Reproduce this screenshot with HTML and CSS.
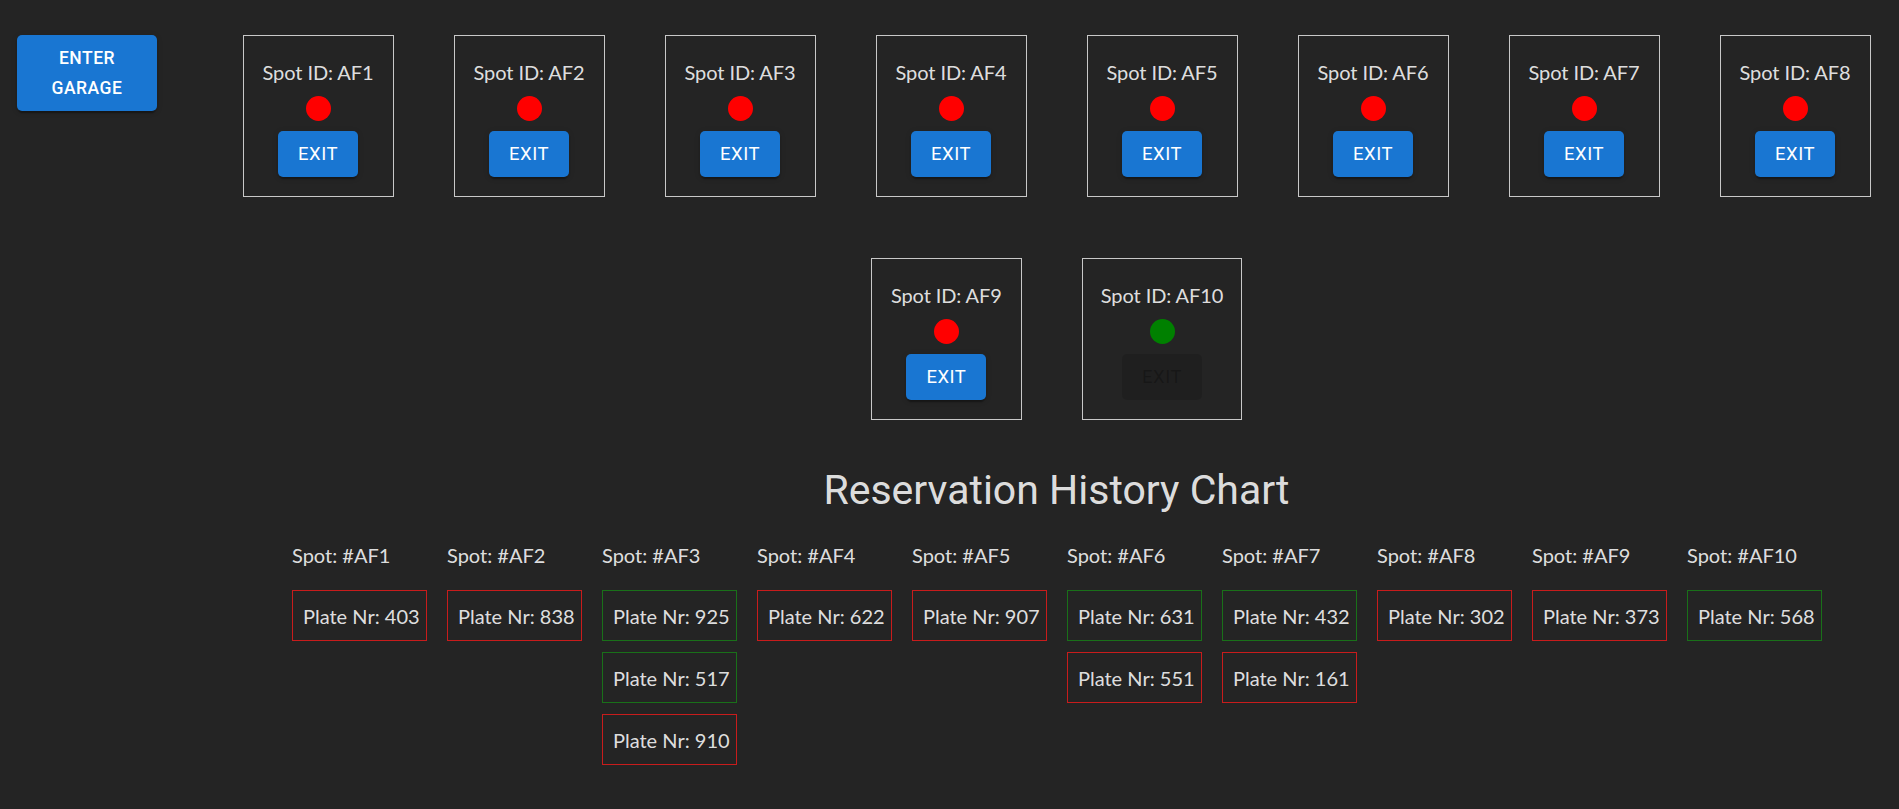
FILE: index.html
```html
<!DOCTYPE html>
<html lang="en">
<head>
<meta charset="utf-8">
<title>Garage</title>
<link rel="stylesheet" href="styles.css">
</head>
<body>
<div class="app">
  <aside class="side">
    <button class="btn btn-enter">ENTER GARAGE</button>
  </aside>
  <main class="main">
    <section class="spots">
      <div class="spot"><div class="spot-id">Spot ID: AF1</div><span class="dot dot-busy"></span><button class="btn btn-exit">EXIT</button></div>
      <div class="spot"><div class="spot-id">Spot ID: AF2</div><span class="dot dot-busy"></span><button class="btn btn-exit">EXIT</button></div>
      <div class="spot"><div class="spot-id">Spot ID: AF3</div><span class="dot dot-busy"></span><button class="btn btn-exit">EXIT</button></div>
      <div class="spot"><div class="spot-id">Spot ID: AF4</div><span class="dot dot-busy"></span><button class="btn btn-exit">EXIT</button></div>
      <div class="spot"><div class="spot-id">Spot ID: AF5</div><span class="dot dot-busy"></span><button class="btn btn-exit">EXIT</button></div>
      <div class="spot"><div class="spot-id">Spot ID: AF6</div><span class="dot dot-busy"></span><button class="btn btn-exit">EXIT</button></div>
      <div class="spot"><div class="spot-id">Spot ID: AF7</div><span class="dot dot-busy"></span><button class="btn btn-exit">EXIT</button></div>
      <div class="spot"><div class="spot-id">Spot ID: AF8</div><span class="dot dot-busy"></span><button class="btn btn-exit">EXIT</button></div>
      <div class="spot"><div class="spot-id">Spot ID: AF9</div><span class="dot dot-busy"></span><button class="btn btn-exit">EXIT</button></div>
      <div class="spot"><div class="spot-id">Spot ID: AF10</div><span class="dot dot-free"></span><button class="btn btn-exit" disabled>EXIT</button></div>
    </section>

    <h1 class="title">Reservation History Chart</h1>

    <section class="history">
      <div class="col"><div class="col-label">Spot: #AF1</div><div class="plate plate-red">Plate Nr: 403</div></div>
      <div class="col"><div class="col-label">Spot: #AF2</div><div class="plate plate-red">Plate Nr: 838</div></div>
      <div class="col"><div class="col-label">Spot: #AF3</div><div class="plate plate-green">Plate Nr: 925</div><div class="plate plate-green">Plate Nr: 517</div><div class="plate plate-red">Plate Nr: 910</div></div>
      <div class="col"><div class="col-label">Spot: #AF4</div><div class="plate plate-red">Plate Nr: 622</div></div>
      <div class="col"><div class="col-label">Spot: #AF5</div><div class="plate plate-red">Plate Nr: 907</div></div>
      <div class="col"><div class="col-label">Spot: #AF6</div><div class="plate plate-green">Plate Nr: 631</div><div class="plate plate-red">Plate Nr: 551</div></div>
      <div class="col"><div class="col-label">Spot: #AF7</div><div class="plate plate-green">Plate Nr: 432</div><div class="plate plate-red">Plate Nr: 161</div></div>
      <div class="col"><div class="col-label">Spot: #AF8</div><div class="plate plate-red">Plate Nr: 302</div></div>
      <div class="col"><div class="col-label">Spot: #AF9</div><div class="plate plate-red">Plate Nr: 373</div></div>
      <div class="col"><div class="col-label">Spot: #AF10</div><div class="plate plate-green">Plate Nr: 568</div></div>
    </section>
  </main>
</div>
</body>
</html>
```
FILE: styles.css
```css
* { box-sizing: border-box; }

html, body {
  margin: 0;
  padding: 0;
  background: #242424;
  color: rgba(255, 255, 255, 0.87);
  font-family: "Lato", "Noto Sans", sans-serif;
  font-size: 20px;
  line-height: 30px;
}

.app {
  display: flex;
  align-items: flex-start;
  min-height: 809px;
}

.side {
  width: 214px;
  flex: 0 0 214px;
  padding: 35px 0 0 17px;
}

.main {
  flex: 1;
  padding-top: 35px;
  min-width: 0;
}

.btn {
  display: inline-flex;
  align-items: center;
  justify-content: center;
  border: 0;
  margin: 0;
  font-family: "Roboto", sans-serif;
  color: #fff;
  background: #1976d2;
  border-radius: 5px;
  text-transform: uppercase;
  letter-spacing: 0.5px;
  cursor: pointer;
  box-shadow: 0 4px 1px -2px rgba(0,0,0,0.2), 0 2px 2px 0 rgba(0,0,0,0.14), 0 1px 6px 0 rgba(0,0,0,0.12);
}

.btn-enter {
  width: 140px;
  padding: 7.5px 20px;
  font-size: 17.5px;
  font-weight: 500;
  line-height: 30.6px;
  text-align: center;
}

.btn-exit {
  min-width: 80px;
  height: 46px;
  padding: 7.5px 20px;
  font-size: 18.5px;
  font-weight: 400;
  line-height: 30.6px;
}

.btn-exit:disabled {
  background: rgba(0, 0, 0, 0.12);
  color: rgba(0, 0, 0, 0.26);
  box-shadow: none;
  cursor: default;
}

.spots {
  display: flex;
  flex-wrap: wrap;
  justify-content: center;
  column-gap: 60px;
  row-gap: 61px;
}

.spot {
  display: flex;
  flex-direction: column;
  align-items: center;
  border: 1px solid #c8c8c8;
  padding: 21px 18px 18px;
  height: 162px;
  min-width: 151px;
}

.spot-id {
  line-height: 30px;
  white-space: nowrap;
  letter-spacing: -0.1px;
}

.dot {
  display: block;
  width: 25px;
  height: 25px;
  border-radius: 50%;
  margin: 9px 0 10px;
}

.dot-busy { background: #ff0000; }
.dot-free { background: #008000; }

.title {
  margin: 44px 0 23px;
  text-align: center;
  font-family: "Roboto", sans-serif;
  font-weight: 400;
  font-size: 41px;
  line-height: 52.5px;
  color: rgba(255, 255, 255, 0.87);
}

.history {
  display: flex;
  justify-content: center;
  gap: 20px;
  padding-left: 1px;
}

.col {
  width: 135px;
  display: flex;
  flex-direction: column;
}

.col-label {
  line-height: 30px;
  margin-bottom: 20px;
  white-space: nowrap;
}

.plate {
  border: 1px solid;
  padding: 10px 10px 9px;
  line-height: 30px;
  height: 51px;
  margin-bottom: 11px;
  white-space: nowrap;
  text-align: left;
}

.plate-red { border-color: #c81c1c; }
.plate-green { border-color: #197019; }
```
